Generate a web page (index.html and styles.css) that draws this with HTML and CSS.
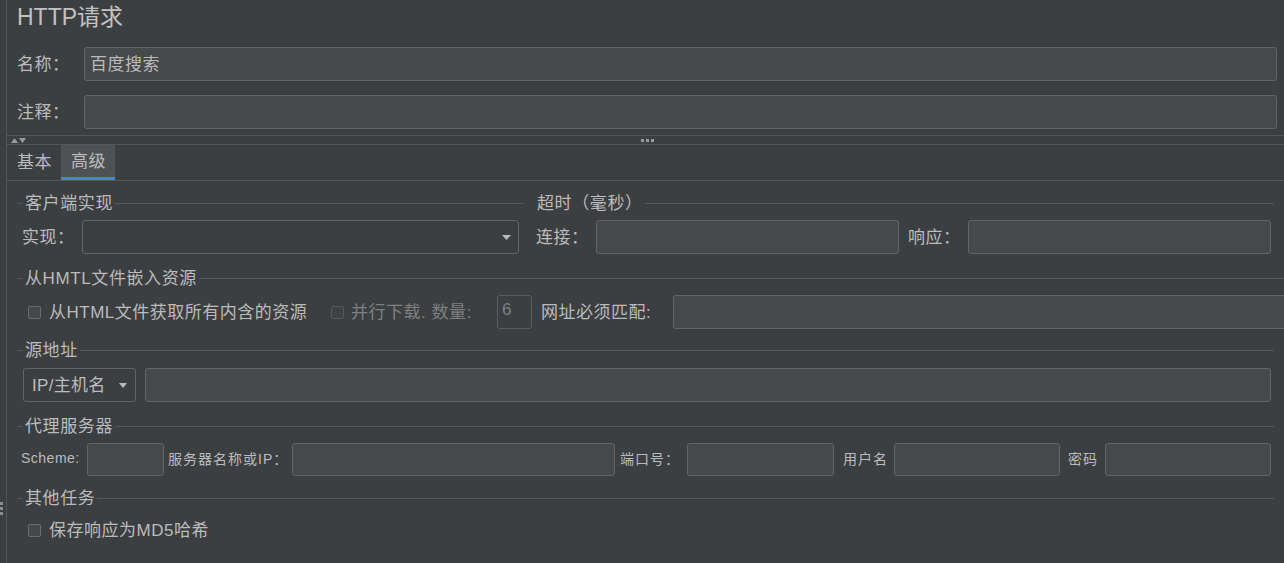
FILE: index.html
```html
<!DOCTYPE html>
<html lang="zh-CN">
<head>
<meta charset="utf-8">
<title>HTTP请求</title>
<link rel="stylesheet" href="styles.css">
</head>
<body>
<div class="app">
  <div class="gutter">
    <svg class="grip" width="3" height="13" viewBox="0 0 3 13"><rect x="0" y="0" width="3" height="3" fill="#8c8c8c"/><rect x="0" y="5" width="3" height="3" fill="#8c8c8c"/><rect x="0" y="10" width="3" height="3" fill="#8c8c8c"/></svg>
  </div>
  <div class="main">
    <div class="title">HTTP请求</div>
    <div class="field">
      <span class="field-label">名称：</span>
      <div class="input">百度搜索</div>
    </div>
    <div class="field">
      <span class="field-label">注释：</span>
      <div class="input"></div>
    </div>
    <div class="splitter">
      <div class="arrows">
        <svg width="7" height="5" viewBox="0 0 7 5"><path d="M0 5 L3.5 0 L7 5 Z" fill="#9a9a9a"/></svg>
        <svg width="7" height="5" viewBox="0 0 7 5"><path d="M0 0 L7 0 L3.5 5 Z" fill="#9a9a9a"/></svg>
      </div>
      <svg class="dots" width="13" height="3" viewBox="0 0 13 3"><rect x="0" y="0" width="3" height="3" fill="#9a9a9a"/><rect x="5" y="0" width="3" height="3" fill="#9a9a9a"/><rect x="10" y="0" width="3" height="3" fill="#9a9a9a"/></svg>
      <div></div>
    </div>
    <div class="tabs">
      <div class="tab">基本</div>
      <div class="tab active">高级</div>
    </div>
    <div class="content">
      <div class="top">
        <div class="panel">
          <div class="legend"><span>客户端实现</span></div>
          <div class="row row-impl">
            <span class="lbl w60">实现：</span>
            <div class="combo combo-impl"><span></span><svg width="9" height="5" viewBox="0 0 9 5"><path d="M0 0 L9 0 L4.5 5 Z" fill="#bbbbbb"/></svg></div>
          </div>
        </div>
        <div class="panel">
          <div class="legend legend-nodash"><span>超时（毫秒）</span></div>
          <div class="row row-timeout">
            <span class="lbl w60">连接：</span>
            <div class="input"></div>
            <span class="lbl w60 gap9">响应：</span>
            <div class="input"></div>
          </div>
        </div>
      </div>

      <div class="section sec-embed">
        <div class="legend"><span>从HMTL文件嵌入资源</span></div>
        <div class="row row-embed">
          <span class="checkbox"></span>
          <span class="lbl cb-text1">从HTML文件获取所有内含的资源</span>
          <span class="checkbox disabled"></span>
          <span class="lbl cb-text2 dim">并行下载. 数量:</span>
          <div class="input disabled-input num">6</div>
          <span class="lbl match-lbl">网址必须匹配:</span>
          <div class="input match-input"></div>
        </div>
      </div>

      <div class="section sec-src">
        <div class="legend"><span>源地址</span></div>
        <div class="row row-src">
          <div class="combo combo-ip"><span>IP/主机名</span><svg width="8" height="5" viewBox="0 0 8 5"><path d="M0 0 L8 0 L4 5 Z" fill="#bbbbbb"/></svg></div>
          <div class="input"></div>
        </div>
      </div>

      <div class="section sec-proxy">
        <div class="legend"><span>代理服务器</span></div>
        <div class="row row-proxy">
          <span class="lbl p-scheme">Scheme:</span>
          <div class="input p-in-scheme"></div>
          <span class="lbl p-host">服务器名称或IP：</span>
          <div class="input p-in-host"></div>
          <span class="lbl p-port">端口号：</span>
          <div class="input p-in-port"></div>
          <span class="lbl p-user">用户名</span>
          <div class="input p-in-user"></div>
          <span class="lbl p-pass">密码</span>
          <div class="input p-in-pass"></div>
        </div>
      </div>

      <div class="section sec-other">
        <div class="legend"><span>其他任务</span></div>
        <div class="row row-other">
          <span class="checkbox"></span>
          <span class="lbl cb-text1">保存响应为MD5哈希</span>
        </div>
      </div>
    </div>
  </div>
</div>
</body>
</html>
```
FILE: styles.css
```css
* { box-sizing: border-box; }
html, body {
  margin: 0;
  padding: 0;
  background: #3c3f41;
  overflow: hidden;
}
body {
  font-family: "Liberation Sans", "Noto Sans CJK SC", sans-serif;
  font-size: 17px;
  letter-spacing: 0.5px;
  color: #bbbbbb;
}
.app {
  display: flex;
  height: 563px;
}
.gutter {
  width: 7px;
  flex: none;
  border-right: 1px solid #4f5355;
}
.grip {
  display: block;
  margin-top: 502px;
}
.main {
  flex: 1;
  min-width: 0;
  display: flex;
  flex-direction: column;
}
.title {
  height: 34px;
  line-height: 34px;
  padding-left: 10px;
  font-size: 23px;
  letter-spacing: 0;
  color: #c2c2c2;
}
.field {
  display: flex;
  align-items: center;
  height: 34px;
  padding: 0 7px 0 10px;
  margin-top: 13px;
}
.field + .field { margin-top: 14px; }
.field-label { width: 67px; flex: none; padding-bottom: 4px; }
.input {
  height: 34px;
  flex: 1;
  min-width: 0;
  background: #45494a;
  border: 1px solid #646464;
  border-radius: 3px;
  padding: 0 0 4px 5px;
  display: flex;
  align-items: center;
}
.splitter {
  margin-top: 6px;
  height: 10px;
  border-top: 1px solid #53575a;
  border-bottom: 1px solid #53575a;
  display: grid;
  grid-template-columns: 1fr auto 1fr;
  align-items: center;
}
.arrows {
  display: flex;
  gap: 1px;
  padding-left: 4px;
}
.arrows svg { display: block; }
.dots { display: block; margin-left: 4px; }
.tabs {
  display: flex;
  height: 36px;
  border-bottom: 1px solid #53575a;
}
.tab {
  height: 35px;
  padding: 0 9px 4px 10px;
  display: flex;
  align-items: center;
}
.tab.active {
  background: #4e5254;
  box-shadow: inset 0 -3px 0 #4a88c7;
  padding-bottom: 6px;
}
.content {
  padding: 0 10px 0 11px;
  display: flex;
  flex-direction: column;
}
.top {
  display: grid;
  grid-template-columns: 506px 1fr;
  margin-top: 12px;
}
.panel { display: flex; flex-direction: column; }
.legend {
  height: 20px;
  display: flex;
  align-items: center;
  letter-spacing: 0.6px;
  white-space: nowrap;
}
.legend span { padding-bottom: 3px; }
.legend::before {
  content: "";
  width: 5px;
  height: 1px;
  background: #54585a;
  margin-right: 2px;
}
.legend::after {
  content: "";
  flex: 1;
  height: 1px;
  background: #54585a;
  margin-left: 2px;
}
.legend-nodash { padding-left: 13px; }
.legend-nodash::before { display: none; }
.row {
  display: flex;
  align-items: center;
  height: 34px;
  margin-top: 7px;
}
.lbl { flex: none; white-space: nowrap; padding-bottom: 4px; }
.w60 { width: 60px; }
.gap9 { margin-left: 9px; }
.row-impl { padding-left: 4px; padding-right: 5px; }
.combo {
  height: 34px;
  border: 1px solid #646464;
  border-radius: 3px;
  display: flex;
  align-items: center;
  justify-content: space-between;
}
.combo span { padding-bottom: 4px; }
.combo svg { display: block; flex: none; }
.combo-impl { flex: 1; padding: 0 7px 0 6px; }
.row-timeout { padding-left: 12px; padding-right: 3px; }

.sec-embed { margin-top: 14px; margin-right: -10px; }
.row-embed { padding-left: 10px; }
.checkbox {
  width: 13px;
  height: 13px;
  flex: none;
  border: 1px solid #6b6b6b;
  border-radius: 2px;
  background: #43494a;
}
.checkbox.disabled {
  border-color: #56595b;
  background: #3e4244;
}
.cb-text1 { margin-left: 8px; }
.row-embed .cb-text1 { width: 282px; }
.cb-text2 { margin-left: 7px; width: 146px; }
.dim { color: #7f7f7f; }
.disabled-input {
  background: transparent;
  border-color: #595c5e;
  color: #7f7f7f;
}
.num { flex: none; width: 35px; padding-left: 4px; }
.match-lbl { margin-left: 9px; width: 132px; }
.match-input { border-right: none; border-radius: 3px 0 0 3px; }

.sec-src { margin-top: 11px; }
.row-src { margin-top: 8px; padding-left: 5px; padding-right: 3px; }
.combo-ip { width: 113px; flex: none; padding: 0 8px 0 8px; margin-right: 9px; letter-spacing: 0.3px; }

.sec-proxy { margin-top: 14px; }
.row-proxy { padding-left: 3px; padding-right: 3px; font-size: 14px; height: 33px; letter-spacing: 1px; }
.row-proxy .input { height: 33px; flex: none; }
.p-scheme { width: 66px; letter-spacing: 0.5px; }
.p-in-scheme { width: 77px !important; }
.p-host { margin-left: 4px; width: 124px; }
.p-in-host { width: 323px; }
.p-port { margin-left: 5px; width: 67px; }
.p-in-port { width: 147px; }
.p-user { margin-left: 9px; width: 51px; }
.p-in-user { width: 166px; }
.p-pass { margin-left: 8px; width: 37px; }
.p-in-pass { width: 166px; }

.sec-other { margin-top: 12px; }
.row-other { margin-top: 5px; padding-left: 10px; }
```
